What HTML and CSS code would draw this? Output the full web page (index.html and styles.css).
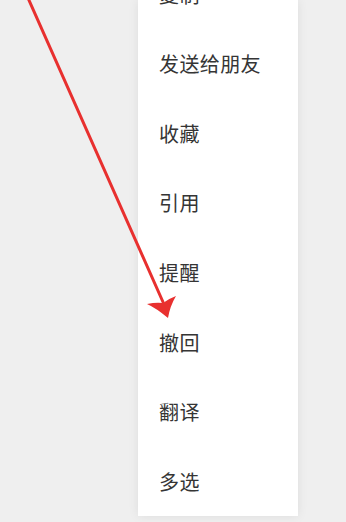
FILE: index.html
```html
<!DOCTYPE html>
<html lang="zh">
<head>
<meta charset="utf-8">
<link rel="stylesheet" href="styles.css">
</head>
<body>
<div class="stage">
  <div class="menu">
    <div class="item">复制</div>
    <div class="item">发送给朋友</div>
    <div class="item">收藏</div>
    <div class="item">引用</div>
    <div class="item">提醒</div>
    <div class="item">撤回</div>
    <div class="item">翻译</div>
    <div class="item">多选</div>
  </div>
  <svg class="arrow" width="346" height="522" viewBox="0 0 346 522">
    <line x1="28" y1="-2" x2="163" y2="302" stroke="#e8302f" stroke-width="3" stroke-linecap="round"/>
    <path d="M168 318 Q156 308 147 304 Q156 302 163 303 Q168 299 176 296 Q170 306 168 318 Z" fill="#e8302f"/>
  </svg>
</div>
</body>
</html>
```
FILE: styles.css
```css
html, body {
  margin: 0;
  padding: 0;
  background: #efefef;
}
.stage {
  position: relative;
  width: 346px;
  height: 522px;
  overflow: hidden;
}
.menu {
  margin-left: 138px;
  width: 160px;
  height: 516px;
  background: #ffffff;
  box-shadow: 0 0 10px rgba(0, 0, 0, 0.08);
  display: flex;
  flex-direction: column;
  justify-content: flex-end;
  overflow: hidden;
}
.item {
  flex: 0 0 69.6px;
  display: flex;
  align-items: center;
  padding-left: 21px;
  font-family: "Noto Sans CJK SC", "Noto Sans", sans-serif;
  font-size: 20px;
  letter-spacing: 0.4px;
  color: #353535;
}
.arrow {
  position: absolute;
  left: 0;
  top: 0;
}
```
